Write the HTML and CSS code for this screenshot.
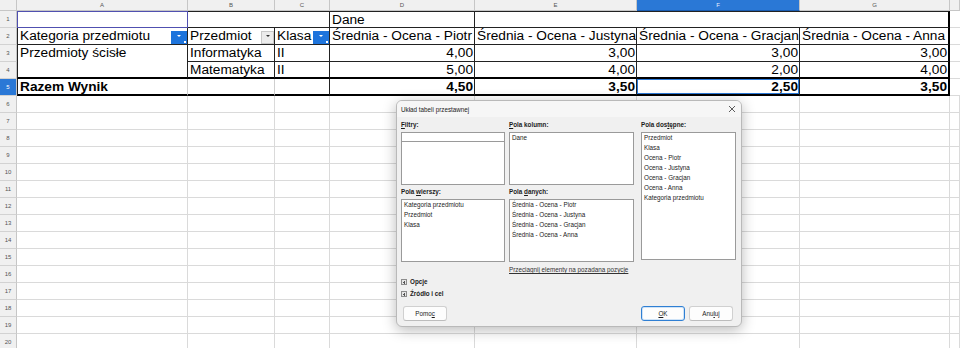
FILE: index.html
```html
<!DOCTYPE html>
<html lang="pl">
<head>
<meta charset="utf-8">
<title>Układ tabeli przestawnej</title>
<link rel="stylesheet" href="styles.css">
</head>
<body>
<div class="sheet">
  <div class="colheads">
    <div class="corner"></div>
    <div class="ch">A</div>
    <div class="ch">B</div>
    <div class="ch">C</div>
    <div class="ch">D</div>
    <div class="ch">E</div>
    <div class="ch sel">F</div>
    <div class="ch">G</div>
    <div class="ch"></div>
  </div>
  <div class="body">
    <div class="rowheads">
      <div class="rh">1</div><div class="rh">2</div><div class="rh">3</div><div class="rh">4</div>
      <div class="rh sel">5</div><div class="rh">6</div><div class="rh">7</div><div class="rh">8</div>
      <div class="rh">9</div><div class="rh">10</div><div class="rh">11</div><div class="rh">12</div>
      <div class="rh">13</div><div class="rh">14</div><div class="rh">15</div><div class="rh">16</div>
      <div class="rh">17</div><div class="rh">18</div><div class="rh">19</div><div class="rh">20</div>
    </div>
    <div class="cells">
      <div class="pivot">
        <!-- row 1 -->
        <div class="c r1 a1"></div>
        <div class="c r1 bc1"></div>
        <div class="c r1 d1">Dane</div>
        <div class="c r1 eg1"></div>
        <div class="c h"></div>
        <!-- row 2 -->
        <div class="c r2 first"><span class="t">Kategoria przedmiotu</span><span class="dd blue"><i></i><b></b></span></div>
        <div class="c r2"><span class="t">Przedmiot</span><span class="dd grey"><i></i></span></div>
        <div class="c r2"><span class="t">Klasa</span><span class="dd blue"><i></i><b></b></span></div>
        <div class="c r2">Średnia - Ocena - Piotr</div>
        <div class="c r2">Średnia - Ocena - Justyna</div>
        <div class="c r2">Średnia - Ocena - Gracjan</div>
        <div class="c r2 last">Średnia - Ocena - Anna</div>
        <div class="c h"></div>
        <!-- row 3 -->
        <div class="c a34 first">Przedmioty ścisłe</div>
        <div class="c r3">Informatyka</div>
        <div class="c r3">II</div>
        <div class="c r3 num">4,00</div>
        <div class="c r3 num">3,00</div>
        <div class="c r3 num">3,00</div>
        <div class="c r3 num last">3,00</div>
        <div class="c h"></div>
        <!-- row 4 -->
        <div class="c r4">Matematyka</div>
        <div class="c r4">II</div>
        <div class="c r4 num">5,00</div>
        <div class="c r4 num">4,00</div>
        <div class="c r4 num">2,00</div>
        <div class="c r4 num last">4,00</div>
        <div class="c h"></div>
        <!-- row 5 -->
        <div class="c r5 first soft">Razem Wynik</div>
        <div class="c r5 soft"></div>
        <div class="c r5"></div>
        <div class="c r5 num">4,50</div>
        <div class="c r5 num">3,50</div>
        <div class="c r5 num cursor">2,50</div>
        <div class="c r5 num last">3,50</div>
        <div class="c h"></div>
      </div>
      <div class="empty">
        <div class="strip"></div><div class="strip"></div><div class="strip"></div><div class="strip"></div>
        <div class="strip"></div><div class="strip"></div><div class="strip"></div><div class="strip"></div>
      </div>
    </div>
  </div>

  <div class="dialog">
    <div class="titlebar">
      <span>Układ tabeli przestawnej</span>
      <svg class="close" width="8" height="8" viewBox="0 0 8 8"><path d="M1 1L7 7M7 1L1 7" stroke="#333" stroke-width="0.8" fill="none"/></svg>
    </div>
    <div class="dbody">
      <div class="fields">
        <div class="lbl col1 row1"><u>F</u>iltry:</div>
        <div class="box col1 row2"><div class="entry"></div></div>
        <div class="lbl col2 row1"><u>P</u>ola kolumn:</div>
        <div class="box col2 row2"><div class="item">Dane</div></div>
        <div class="lbl col3 row1">Pola dos<u>t</u>ępne:</div>
        <div class="box col3 rowspan">
          <div class="item">Przedmiot</div>
          <div class="item">Klasa</div>
          <div class="item">Ocena - Piotr</div>
          <div class="item">Ocena - Justyna</div>
          <div class="item">Ocena - Gracjan</div>
          <div class="item">Ocena - Anna</div>
          <div class="item">Kategoria przedmiotu</div>
        </div>
        <div class="lbl col1 row3">Pola <u>w</u>ierszy:</div>
        <div class="box col1 row4">
          <div class="item">Kategoria przedmiotu</div>
          <div class="item">Przedmiot</div>
          <div class="item">Klasa</div>
        </div>
        <div class="lbl col2 row3">Pola <u>d</u>anych:</div>
        <div class="box col2 row4">
          <div class="item">Średnia - Ocena - Piotr</div>
          <div class="item">Średnia - Ocena - Justyna</div>
          <div class="item">Średnia - Ocena - Gracjan</div>
          <div class="item">Średnia - Ocena - Anna</div>
        </div>
      </div>
      <div class="hint">Przeciagnij elementy na pozadana pozycje</div>
      <div class="expander"><span class="plus"></span>Opcje</div>
      <div class="expander second"><span class="plus"></span>Źródło i cel</div>
      <div class="buttons">
        <button class="btn">Pomo<u>c</u></button>
        <span class="spacer"></span>
        <button class="btn ok"><u>O</u>K</button>
        <button class="btn">Anu<u>l</u>uj</button>
      </div>
    </div>
  </div>
</div>
</body>
</html>
```

FILE: styles.css
```css
* { box-sizing: border-box; }
html, body { margin: 0; padding: 0; background: #ffffff; }
body { width: 960px; height: 348px; overflow: hidden; font-family: "Liberation Sans", Arial, sans-serif; }

.sheet { position: relative; width: 960px; height: 348px; overflow: hidden; }

.colheads {
  display: grid;
  grid-template-columns: 17px 171px 87px 55px 145px 162px 163px 150px 10px;
  height: 11px;
  background: #f0f0f0;
}
.corner { border-right: 1px solid #c6c6c6; border-bottom: 1px solid #c6c6c6; }
.ch {
  border-right: 1px solid #c6c6c6;
  border-bottom: 1px solid #c6c6c6;
  font-size: 6px;
  line-height: 10px;
  color: #555;
  text-align: center;
}
.ch.sel { background: #2a78d6; color: #e8f1ff; border-bottom-color: #1a5cb0; }

.body { display: flex; }
.rowheads { width: 17px; flex: none; background: #f0f0f0; }
.rh {
  height: 17px;
  border-right: 1px solid #c6c6c6;
  border-bottom: 1px solid #d2d2d2;
  font-size: 6px;
  line-height: 16px;
  color: #555;
  text-align: center;
}
.rh.sel { background: #2a78d6; color: #ffffff; }

.cells { flex: 1; }

.pivot {
  display: grid;
  grid-template-columns: 171px 87px 55px 145px 162px 163px 150px 10px;
  grid-template-rows: repeat(5, 17px);
  font-size: 13.7px;
  color: #000;
}
.c {
  height: 17px;
  line-height: 16px;
  padding: 0 1px 0 2px;
  white-space: nowrap;
  overflow: hidden;
}
.c.h { border-bottom: 1px solid #dadada; }

.r1 { border-top: 1px solid #222; border-bottom: 1px solid #222; }
.a1 { border: 1px solid #5050b0; }
.bc1 { grid-column: span 2; border-right: 1px solid #222; }
.d1 { border-right: 1px solid #222; }
.eg1 { grid-column: span 3; border-right: 2px solid #000; }

.r2, .r3 { border-right: 1px solid #222; border-bottom: 1px solid #222; }
.r2 { display: flex; align-items: flex-end; padding-right: 0; }
.r2 .t { flex: 1; overflow: hidden; }
.first { border-left: 1px solid #222; }
.last { border-right: 2px solid #000 !important; }

.a34 { grid-row: span 2; height: 34px; border-right: 1px solid #222; border-bottom: 2px solid #000; }
.r4 { border-right: 1px solid #222; border-bottom: 2px solid #000; }
.r5 { border-right: 1px solid #222; border-bottom: 2px solid #000; font-weight: bold; }
.r5.soft { border-right-color: #cfcfcf; }
.num { text-align: right; }
.cursor { box-shadow: inset 0 0 0 1px #2a78d6; }

.dd {
  position: relative;
  flex: none;
  height: 13px;
  align-self: flex-end;
}
.dd.blue { width: 16px; background: #1d74dc; }
.dd.grey { width: 13px; background: #ececec; border: 1px solid #c8c8c8; }
.dd i {
  position: absolute;
  left: 50%;
  top: 4px;
  margin-left: -2px;
  width: 0; height: 0;
  border-left: 2px solid transparent;
  border-right: 2px solid transparent;
  border-top: 2px solid #ffffff;
}
.dd.grey i { border-top-color: #333; top: 3px; margin-left: -2px; }
.dd b {
  position: absolute;
  right: 1px; bottom: 1px;
  width: 2px; height: 2px;
  background: #ffffff;
}

.empty {
  display: grid;
  grid-template-columns: 171px 87px 55px 145px 162px 163px 150px 10px;
  height: 255px;
}
.strip {
  border-right: 1px solid #dadada;
  background: repeating-linear-gradient(to bottom, transparent 0, transparent 16px, #dadada 16px, #dadada 17px);
}

/* dialog */
.dialog {
  position: absolute;
  left: 396px;
  top: 100px;
  width: 346px;
  height: 227px;
  background: #f0f0f0;
  border: 1px solid #b9b9b9;
  border-radius: 6px;
  box-shadow: 0 3px 14px rgba(0,0,0,0.28);
  font-family: "Liberation Sans", Arial, sans-serif;
  font-size: 6.3px;
  color: #1b1b1b;
  overflow: hidden;
}
.titlebar {
  height: 16px;
  display: flex;
  align-items: center;
  justify-content: space-between;
  padding: 0 5px 0 4px;
  background: #f6f6f6;
}
.close { display: block; }
.dbody { padding: 4px 8px 0 4px; }
.fields {
  display: grid;
  grid-template-columns: 104px 4px 125px 7px 95px;
  grid-template-rows: 8px 53px 8px 63px;
  row-gap: 3px;
}
.col1 { grid-column: 1; }
.col2 { grid-column: 3; }
.col3 { grid-column: 5; }
.row1 { grid-row: 1; }
.row2 { grid-row: 2; }
.row3 { grid-row: 3; }
.row4 { grid-row: 4; }
.rowspan { grid-row: 2 / 5; height: 128px; }
.lbl { font-weight: bold; line-height: 8px; white-space: nowrap; }
.box {
  background: #ffffff;
  border: 1px solid #9a9a9a;
  padding: 0 2px;
}
.entry { height: 9px; margin: 0 -2px; border-bottom: 1px solid #9a9a9a; }
.item { line-height: 10px; white-space: nowrap; }
.hint {
  margin: 4px 0 0 108px;
  line-height: 8px;
  text-decoration: underline;
  color: #333;
}
.expander {
  display: flex;
  align-items: center;
  margin-top: 4px;
  line-height: 8px;
  font-weight: bold;
}
.expander.second { margin-top: 4px; }
.plus {
  position: relative;
  width: 6px;
  height: 6px;
  margin: 0 3px 0 0;
  border: 1px solid #8c8c8c;
  background: #e6e6e6;
}
.plus::before, .plus::after { content: ""; position: absolute; background: #555; }
.plus::before { left: 1px; right: 1px; top: 1.5px; height: 1px; }
.plus::after { top: 0.5px; bottom: 0.5px; left: 1.5px; width: 1px; }
.buttons { display: flex; margin-top: 8px; padding-left: 2px; }
.spacer { flex: 1; }
.btn {
  width: 44px;
  height: 15px;
  padding: 0;
  font-family: "Liberation Sans", Arial, sans-serif;
  font-size: 6.3px;
  color: #1b1b1b;
  background: #fdfdfd;
  border: 1px solid #d0d0d0;
  border-bottom-color: #bcbcbc;
  border-radius: 3px;
  margin-left: 4px;
}
.btn:first-child { margin-left: 0; }
.btn.ok { border: 1px solid #2f7fd3; box-shadow: inset 0 0 0 1px #cfe3f7; }
```
